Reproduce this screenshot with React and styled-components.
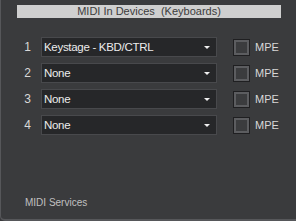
import React from 'react';
import styled, { createGlobalStyle } from 'styled-components';

const GlobalStyle = createGlobalStyle`
    html, body {
        margin: 0;
        padding: 0;
        background: #3a3a3c;
    }
`;

const Panel = styled.div`
    box-sizing: border-box;
    width: 296px;
    height: 221px;
    background: #3a3b3d;
    border-left: 1px solid #56575a;
    border-bottom: 2px solid #56575a;
    border-bottom-left-radius: 5px;
    padding: 5px 15px 0 16px;
    display: flex;
    flex-direction: column;
    font-family: Tahoma, "Liberation Sans", Arial, sans-serif;
    color: #d4d4d4;
`;

const Header = styled.div`
    height: 13px;
    background: #cfcfcf;
    color: #3c3c3c;
    font-size: 11px;
    line-height: 13px;
    text-align: center;
    white-space: pre;
`;

const Rows = styled.div`
    display: flex;
    flex-direction: column;
    gap: 6px;
    margin-top: 19px;
`;

const Row = styled.div`
    display: flex;
    align-items: center;
    height: 20px;
`;

const Num = styled.span`
    width: 24px;
    text-align: right;
    padding-right: 10px;
    box-sizing: border-box;
    font-size: 12px;
    color: #d8d8d8;
`;

const Select = styled.div`
    box-sizing: border-box;
    width: 176px;
    height: 20px;
    background: #262729;
    border: 1px solid #48494c;
    display: flex;
    align-items: center;
    justify-content: space-between;
    padding: 0 6px 0 2px;
    font-size: 11.5px;
    letter-spacing: -0.3px;
    color: #ececec;
`;

const Arrow = styled.span`
    width: 0;
    height: 0;
    border-left: 3px solid transparent;
    border-right: 3px solid transparent;
    border-top: 3px solid #f0f0f0;
`;

const Check = styled.span`
    box-sizing: border-box;
    width: 17px;
    height: 17px;
    margin-left: 16px;
    border: 1px solid #1f1f21;
    background: #3b3c3e;
    box-shadow: inset 0 0 0 2px #5c5d60;
`;

const Label = styled.span`
    margin-left: 5px;
    font-size: 11px;
    color: #d8d8d8;
`;

const Footer = styled.div`
    margin-top: auto;
    margin-bottom: 11px;
    padding-left: 8px;
    font-size: 10px;
    color: #c0c0c0;
`;

const devices = ['Keystage - KBD/CTRL', 'None', 'None', 'None'];

export default function App() {
    return (
        <>
            <GlobalStyle />
            <Panel>
                <Header>MIDI In Devices  (Keyboards)</Header>
                <Rows>
                    {devices.map((d, i) => (
                        <Row key={i}>
                            <Num>{i + 1}</Num>
                            <Select>
                                <span>{d}</span>
                                <Arrow />
                            </Select>
                            <Check />
                            <Label>MPE</Label>
                        </Row>
                    ))}
                </Rows>
                <Footer>MIDI Services</Footer>
            </Panel>
        </>
    );
}
